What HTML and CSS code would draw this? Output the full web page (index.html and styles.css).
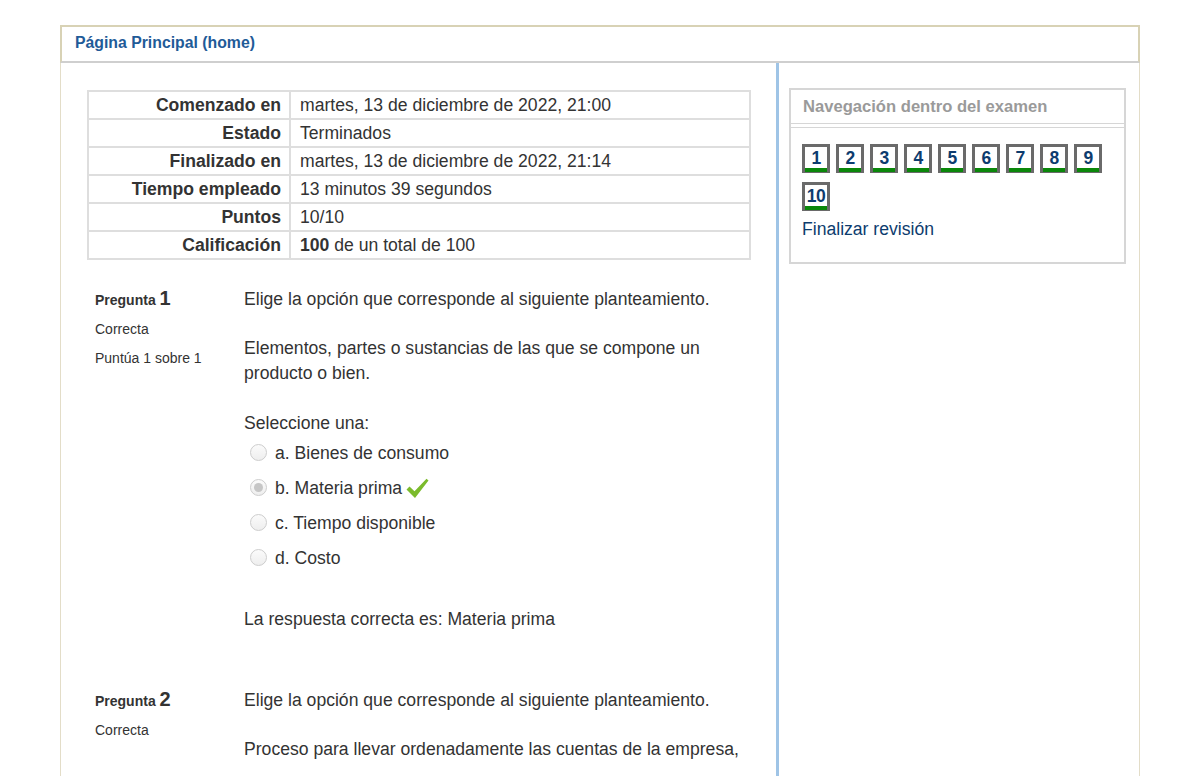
FILE: index.html
```html
<!DOCTYPE html>
<html lang="es">
<head>
<meta charset="utf-8">
<title>Revisión del intento</title>
<link rel="stylesheet" href="styles.css">
</head>
<body>
<div class="page">
  <div class="topbar"><a class="home" href="#">Página Principal (home)</a></div>
  <div class="main">
    <div class="region-main">
      <table class="summary">
        <tr><th>Comenzado en</th><td>martes, 13 de diciembre de 2022, 21:00</td></tr>
        <tr><th>Estado</th><td>Terminados</td></tr>
        <tr><th>Finalizado en</th><td>martes, 13 de diciembre de 2022, 21:14</td></tr>
        <tr><th>Tiempo empleado</th><td>13 minutos 39 segundos</td></tr>
        <tr><th>Puntos</th><td>10/10</td></tr>
        <tr><th>Calificación</th><td><b>100</b> de un total de 100</td></tr>
      </table>

      <div class="que">
        <div class="info">
          <div class="qno">Pregunta <span class="num">1</span></div>
          <div class="line">Correcta</div>
          <div class="line">Puntúa 1 sobre 1</div>
        </div>
        <div class="content">
          <p>Elige la opción que corresponde al siguiente planteamiento.</p>
          <p>Elementos, partes o sustancias de las que se compone un producto o bien.</p>
          <div class="prompt">Seleccione una:</div>
          <div class="answer">
            <div class="opt"><span class="radio"></span>a. Bienes de consumo</div>
            <div class="opt"><span class="radio checked"></span>b. Materia prima
              <svg class="tick" width="23" height="21" viewBox="0 0 23 21"><path d="M0.5 11.5 L3.5 8.5 L8.5 13.2 L20.5 0.8 L22.5 2.6 L9 20 Z" fill="#7bbb2c"/></svg>
            </div>
            <div class="opt"><span class="radio"></span>c. Tiempo disponible</div>
            <div class="opt"><span class="radio"></span>d. Costo</div>
          </div>
          <div class="rightanswer">La respuesta correcta es: Materia prima</div>
        </div>
      </div>

      <div class="que que2">
        <div class="info">
          <div class="qno">Pregunta <span class="num">2</span></div>
          <div class="line">Correcta</div>
        </div>
        <div class="content">
          <p>Elige la opción que corresponde al siguiente planteamiento.</p>
          <p>Proceso para llevar ordenadamente las cuentas de la empresa,</p>
        </div>
      </div>
    </div>

    <aside class="side">
      <div class="block">
        <div class="block-header">Navegación dentro del examen</div>
        <div class="block-content">
          <div class="qnbuttons">
            <a class="qnbutton" href="#">1</a>
            <a class="qnbutton" href="#">2</a>
            <a class="qnbutton" href="#">3</a>
            <a class="qnbutton" href="#">4</a>
            <a class="qnbutton" href="#">5</a>
            <a class="qnbutton" href="#">6</a>
            <a class="qnbutton" href="#">7</a>
            <a class="qnbutton" href="#">8</a>
            <a class="qnbutton" href="#">9</a>
            <a class="qnbutton" href="#">10</a>
          </div>
          <a class="finish" href="#">Finalizar revisión</a>
        </div>
      </div>
    </aside>
  </div>
</div>
</body>
</html>
```

FILE: styles.css
```css
html, body {
  margin: 0;
  padding: 0;
  background: #fff;
}
body {
  font-family: "Liberation Sans", Arial, sans-serif;
  font-size: 17.6px;
  color: #333;
  overflow: hidden;
}
.page {
  margin: 25px 0 0 60px;
  width: 1080px;
}
.topbar {
  height: 38px;
  box-sizing: border-box;
  border: 2px solid #d8d2b5;
  border-bottom: 2px solid #cfcfcf;
  padding: 5px 13px 0;
  line-height: 20px;
}
.home {
  color: #1f5b98;
  font-weight: bold;
  font-size: 15.8px;
  text-decoration: none;
}
.main {
  display: flex;
  border-left: 1px solid #e3ddc8;
  border-right: 1px solid #e3ddc8;
  min-height: 760px;
}
.region-main {
  width: 715px;
  box-sizing: border-box;
  padding: 27px 25px 0 26px;
}
.summary {
  width: 664px;
  border-collapse: collapse;
  border: 2px solid #dedede;
}
.summary th,
.summary td {
  border: 2px solid #dedede;
  height: 26px;
  padding: 0;
  line-height: 26px;
  white-space: nowrap;
}
.summary th {
  width: 192px;
  text-align: right;
  padding-right: 8px;
  font-weight: bold;
}
.summary td {
  text-align: left;
  padding-left: 9px;
}
.que {
  display: flex;
  margin-top: 27px;
  padding-left: 8px;
}
.que2 {
  margin-top: 56px;
}
.info {
  width: 149px;
  flex: none;
  font-size: 14px;
  margin-top: 1px;
}
.info .qno {
  height: 25px;
  line-height: 25px;
  font-weight: bold;
}
.info .num {
  font-size: 20px;
  line-height: 20px;
}
.info .line {
  line-height: 25px;
  margin-top: 4px;
}
.content {
  width: 507px;
  line-height: 25px;
}
.content p {
  margin: 0 0 24px;
}
.prompt {
  margin-top: 25px;
}
.opt {
  height: 35px;
  display: flex;
  align-items: center;
  padding-left: 7px;
}
.radio {
  width: 15px;
  height: 15px;
  border: 1.5px solid #cdcdcd;
  border-radius: 50%;
  background: linear-gradient(#fbfbfb, #eeeeee);
  margin-right: 8px;
  margin-left: -1px;
  box-sizing: content-box;
  position: relative;
  top: -1px;
}
.radio.checked::after {
  content: "";
  position: absolute;
  left: 3px;
  top: 3px;
  width: 9px;
  height: 9px;
  border-radius: 50%;
  background: #c6c6c6;
}
.tick {
  margin-left: 4px;
}
.rightanswer {
  margin-top: 31px;
}
.side {
  border-left: 3px solid #9fc4e6;
  padding: 25px 0 0 10px;
}
.block {
  width: 337px;
  box-sizing: border-box;
  border: 2px solid #d6d6d6;
}
.block-header {
  height: 33px;
  line-height: 33px;
  padding-left: 12px;
  color: #9a9a9a;
  font-weight: bold;
  font-size: 16.6px;
  border-bottom: 1px solid #d6d6d6;
  margin-bottom: 3px;
}
.block-content {
  border-top: 1px solid #d6d6d6;
  padding: 16px 11px 20px;
}
.qnbuttons {
  display: flex;
  flex-wrap: wrap;
  row-gap: 9px;
}
.qnbutton {
  width: 28px;
  height: 29px;
  box-sizing: border-box;
  margin-right: 6px;
  border: 3px solid #6a6a6a;
  border-bottom-width: 1px;
  box-shadow: inset 0 -4px 0 #0a870a;
  color: #0d3c6e;
  font-weight: bold;
  font-size: 17.5px;
  line-height: 22px;
  text-align: center;
  text-decoration: none;
  letter-spacing: -0.5px;
}
.finish {
  display: block;
  margin-top: 6px;
  line-height: 25px;
  color: #0d3c6e;
  text-decoration: none;
}
```
